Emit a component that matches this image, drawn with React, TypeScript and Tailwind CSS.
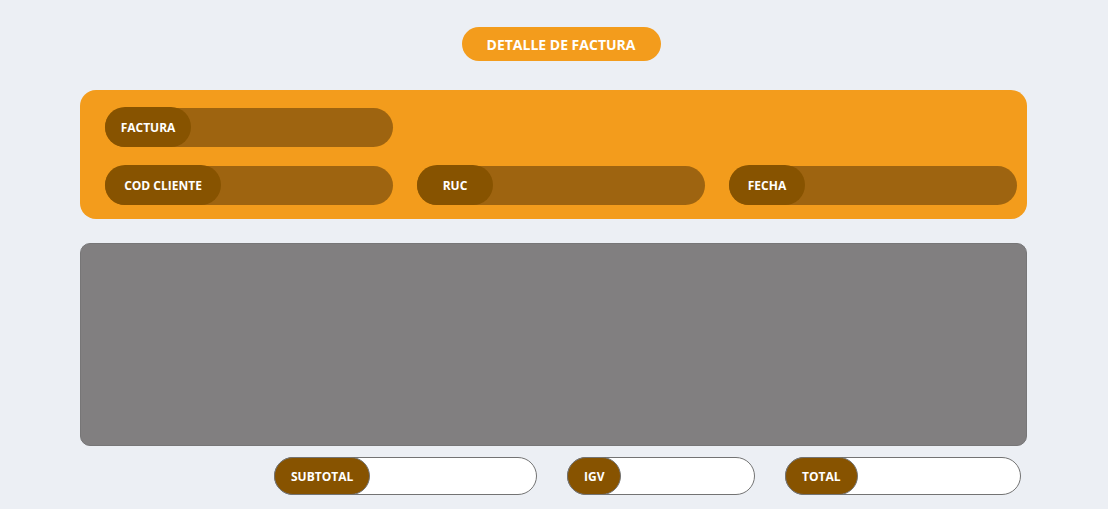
const font = { fontFamily: '"Open Sans", "Noto Sans", sans-serif' };

function DarkField({ label, labelWidth }: { label: string; labelWidth: string }) {
  return (
    <div className="flex h-[39px] w-[288px] items-center rounded-full bg-[#9e6410]">
      <div
        className={`flex h-[40px] ${labelWidth} -mt-px items-center justify-center rounded-full bg-[#875300] pt-[2px] text-[12px] font-bold text-white`}
      >
        {label}
      </div>
    </div>
  );
}

function LightField({ label, width }: { label: string; width: string }) {
  return (
    <div className={`flex h-[38px] ${width} items-stretch rounded-full border border-[#737373] bg-white`}>
      <div className="-my-px -ml-px flex items-center rounded-full border border-[#737373] bg-[#875300] px-4 pt-[2px] text-[12px] font-bold text-white">
        {label}
      </div>
    </div>
  );
}

export default function App() {
  return (
    <div className="min-h-[509px] w-full bg-[#eceff4] pt-[27px]" style={font}>
      <div className="flex justify-center pl-[14px]">
        <div className="flex h-[34px] w-[199px] items-center justify-center rounded-full bg-[#f39c1c] text-[14px] font-bold text-white">
          DETALLE DE FACTURA
        </div>
      </div>

      <div className="ml-[80px] mr-[81px] mt-[29px] flex h-[129px] flex-col gap-[19px] rounded-[16px] bg-[#f39c1c] pl-[25px] pt-[18px]">
        <DarkField label="FACTURA" labelWidth="w-[86px]" />
        <div className="flex gap-[24px]">
          <DarkField label="COD CLIENTE" labelWidth="w-[116px]" />
          <DarkField label="RUC" labelWidth="w-[76px]" />
          <DarkField label="FECHA" labelWidth="w-[76px]" />
        </div>
      </div>

      <div className="ml-[80px] mr-[81px] mt-[24px] h-[203px] rounded-[10px] border border-[#777677] bg-[#817f80]" />

      <div className="mt-[11px] flex pl-[274px]">
        <LightField label="SUBTOTAL" width="w-[263px]" />
        <div className="ml-[30px]">
          <LightField label="IGV" width="w-[188px]" />
        </div>
        <div className="ml-[30px]">
          <LightField label="TOTAL" width="w-[236px]" />
        </div>
      </div>
    </div>
  );
}
